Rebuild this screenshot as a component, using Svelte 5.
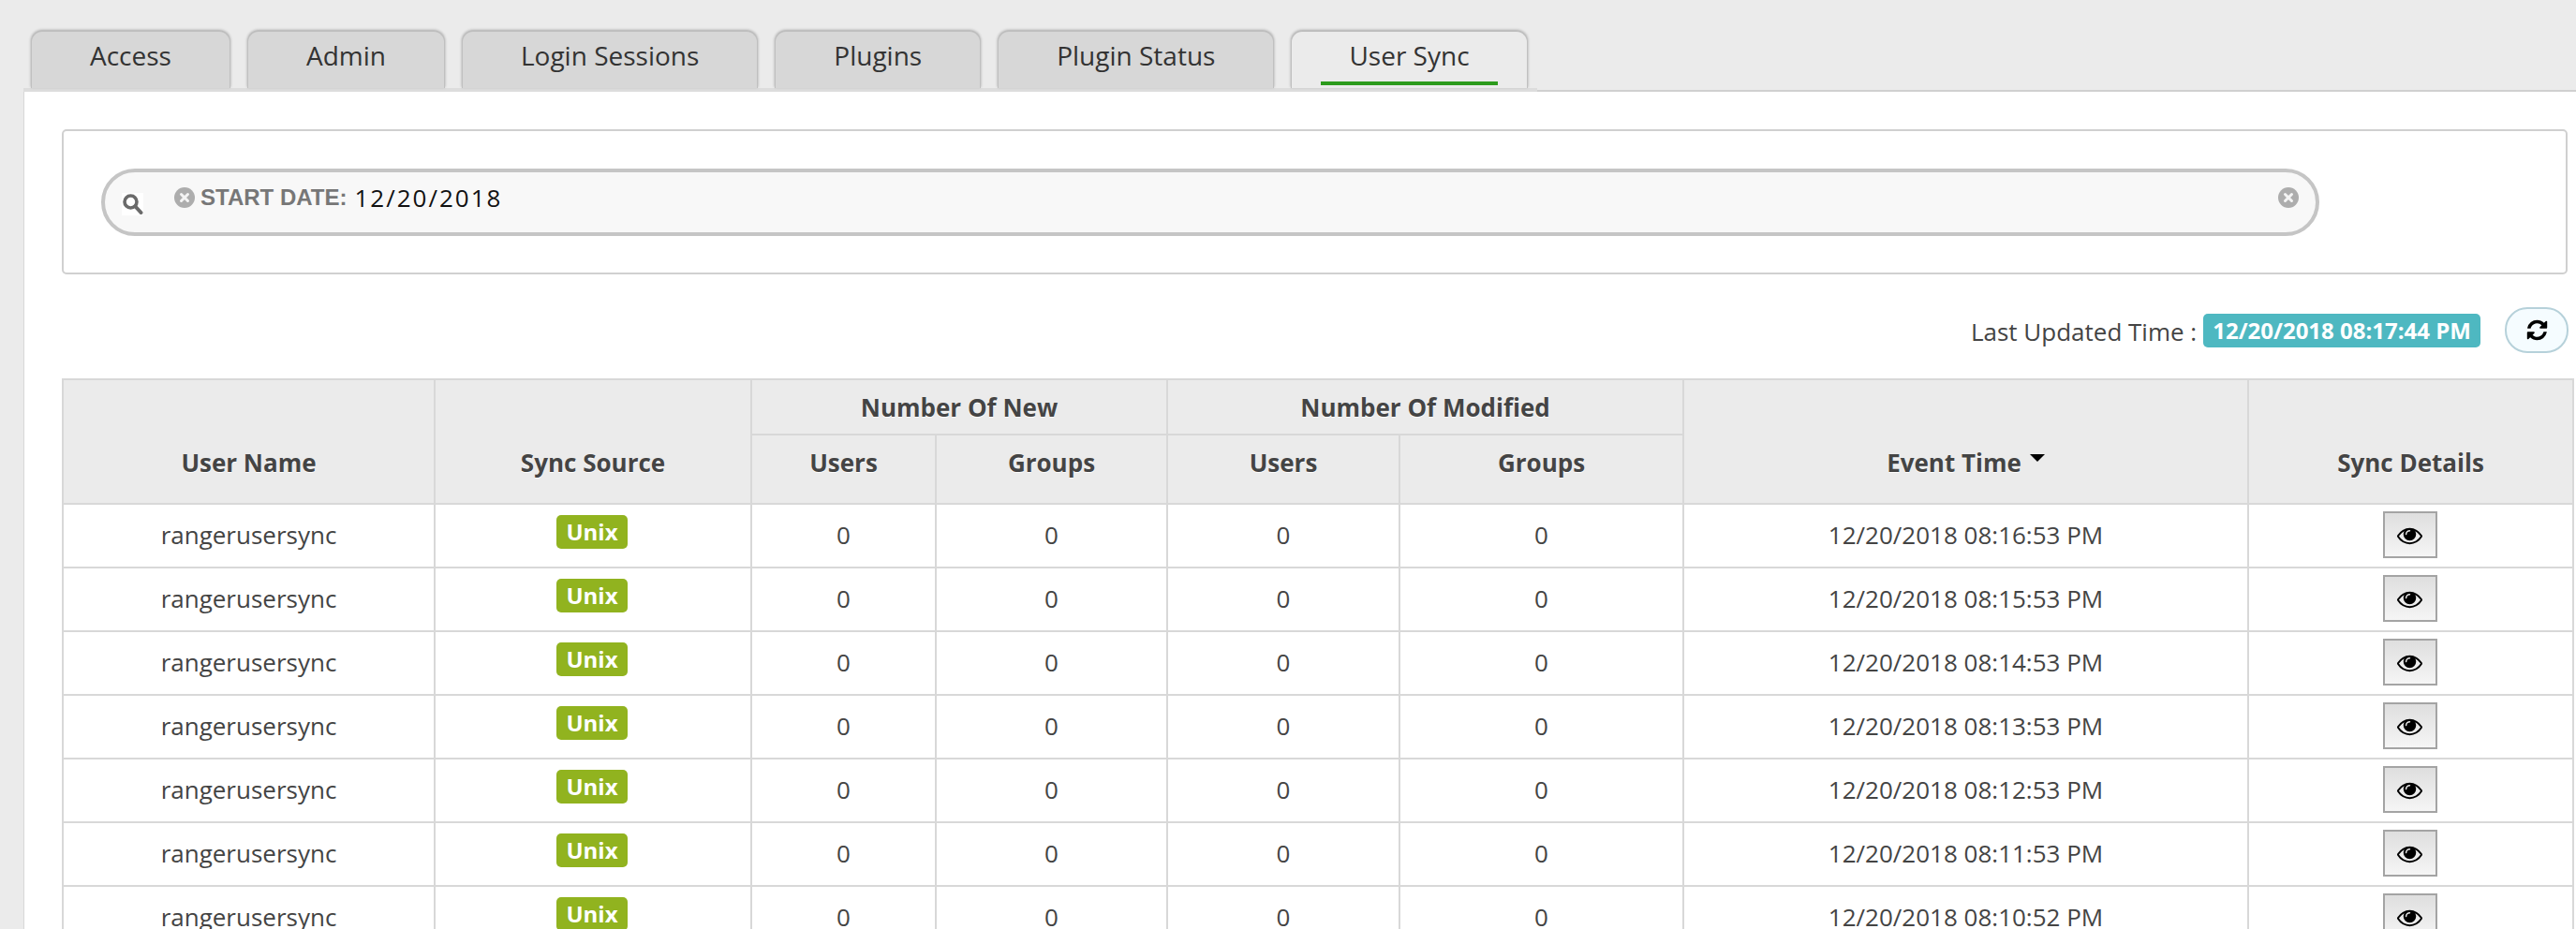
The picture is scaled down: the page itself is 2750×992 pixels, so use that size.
<script lang="ts">
  const tabs = ['Access', 'Admin', 'Login Sessions', 'Plugins', 'Plugin Status', 'User Sync'];
  const active = 'User Sync';
  const colWidths = [397, 338, 197, 247, 248, 303, 603, 347];

  const rows = [
    '12/20/2018 08:16:53 PM',
    '12/20/2018 08:15:53 PM',
    '12/20/2018 08:14:53 PM',
    '12/20/2018 08:13:53 PM',
    '12/20/2018 08:12:53 PM',
    '12/20/2018 08:11:53 PM',
    '12/20/2018 08:10:52 PM'
  ];

  const refreshPath =
    'M1639 1056q0 5-1 7-64 268-268 434.5t-478 166.5q-146 0-282.5-55t-243.5-157l-129 129q-19 19-45 19t-45-19-19-45v-448q0-26 19-45t45-19h448q26 0 45 19t19 45-19 45l-137 137q71 66 161 102t187 36q134 0 250-65t186-179q11-17 53-117 8-23 30-23h192q13 0 22.5 9.5t9.5 22.5zm25-800v448q0 26-19 45t-45 19h-448q-26 0-45-19t-19-45 19-45l138-138q-148-137-349-137-134 0-250 65t-186 179q-11 17-53 117-8 23-30 23h-199q-13 0-22.5-9.5t-9.5-22.5v-7q65-268 270-434.5t480-166.5q146 0 284 55.5t245 156.5l130-129q19-19 45-19t45 19 19 45z';
  const eyePath =
    'M1664 960q-152-236-381-353 61 104 61 225 0 185-131.5 316.5t-316.5 131.5-316.5-131.5-131.5-316.5q0-121 61-225-229 117-381 353 133 205 333.5 326.5t434.5 121.5 434.5-121.5 333.5-326.5zm-720-384q0-20-14-34t-34-14q-125 0-214.5 89.5t-89.5 214.5q0 20 14 34t34 14 34-14 14-34q0-86 61-147t147-61q20 0 34-14t14-34zm848 384q0 34-20 69-140 230-376.5 368.5t-499.5 138.5-499.5-139-376.5-368q-20-35-20-69t20-69q140-229 376.5-368t499.5-139 499.5 139 376.5 368q20 35 20 69z';
</script>

{#snippet clearIcon()}
  <svg class="clear" viewBox="0 0 22 22" aria-hidden="true">
    <circle cx="11" cy="11" r="11" fill="#adadad" />
    <path d="M7.5 7.5l7 7M14.5 7.5l-7 7" stroke="#f4f4f4" stroke-width="3" stroke-linecap="round" />
  </svg>
{/snippet}

<div class="page">
  <nav class="tabs">
    {#each tabs as tab (tab)}
      <div class="tab" class:active={tab === active}>
        <span class="tab-label">{tab}</span>
      </div>
    {/each}
  </nav>

  <main class="panel">
    <section class="search-box">
      <div class="pill">
        <span class="search-icon">
          <svg viewBox="0 0 23 23" width="23" height="23" aria-hidden="true">
            <circle cx="9.5" cy="9.5" r="6.5" fill="none" stroke="#6a6a6a" stroke-width="3.6" />
            <path d="M14.5 14.5l6 6.5" stroke="#6a6a6a" stroke-width="4" stroke-linecap="round" />
          </svg>
        </span>
        <div class="facet">
          {@render clearIcon()}
          <span class="facet-label">START DATE:</span>
          <span class="facet-value">12/20/2018</span>
        </div>
        {@render clearIcon()}
      </div>
    </section>

    <div class="updated">
      <span class="updated-label">Last Updated Time :</span>
      <span class="updated-time">12/20/2018 08:17:44 PM</span>
      <button class="refresh" aria-label="Refresh">
        <svg viewBox="0 0 1792 1792" width="25" height="25"><path d={refreshPath} /></svg>
      </button>
    </div>

    <table>
      <colgroup>
        {#each colWidths as w}
          <col style="width: {w}px" />
        {/each}
      </colgroup>
      <thead>
        <tr class="head-top">
          <th rowspan="2">User Name</th>
          <th rowspan="2">Sync Source</th>
          <th colspan="2" class="group">Number Of New</th>
          <th colspan="2" class="group">Number Of Modified</th>
          <th rowspan="2">Event Time<span class="caret"></span></th>
          <th rowspan="2">Sync Details</th>
        </tr>
        <tr class="head-sub">
          <th>Users</th>
          <th>Groups</th>
          <th>Users</th>
          <th>Groups</th>
        </tr>
      </thead>
      <tbody>
        {#each rows as time (time)}
          <tr>
            <td>rangerusersync</td>
            <td><span class="source">Unix</span></td>
            <td>0</td>
            <td>0</td>
            <td>0</td>
            <td>0</td>
            <td>{time}</td>
            <td>
              <button class="details" aria-label="View details">
                <svg viewBox="0 0 1792 1792" width="27" height="27"><path d={eyePath} /></svg>
              </button>
            </td>
          </tr>
        {/each}
      </tbody>
    </table>
  </main>
</div>

<style>
  :global(html),
  :global(body) {
    overflow: hidden;
  }

  :global(body) {
    background: #ebebeb;
  }

  .page {
    font-family: 'Open Sans', 'Liberation Sans', sans-serif;
    color: #444;
    height: 992px;
    overflow: hidden;
    padding-top: 33px;
    box-sizing: border-box;
  }

  .tabs {
    position: relative;
    z-index: 1;
    display: flex;
    gap: 18px;
    width: fit-content;
    margin-left: 25px;
    margin-bottom: -2px;
    padding: 0 10px 0 8px;
    border-bottom: 4px solid #ddd;
  }

  .tab {
    box-sizing: border-box;
    height: 61px;
    padding: 5px 62px 0;
    background: #d7d7d7;
    border: 1px solid #c0c0c0;
    border-bottom: none;
    border-radius: 12px 12px 0 0;
    box-shadow: 0 -1px 3px rgba(0, 0, 0, 0.3);
    font-size: 28px;
    line-height: 41px;
    white-space: nowrap;
    color: #333;
  }

  .tab.active {
    background: #ebebeb;
    padding: 5px 31px 0;
  }

  .tab-label {
    display: block;
    height: 52px;
    box-sizing: border-box;
  }

  .tab.active .tab-label {
    border-bottom: 4px solid #2c9b1c;
    padding-inline: 30px;
  }

  .panel {
    background: #fff;
    margin-left: 25px;
    border-left: 1px solid #d8d8d8;
    border-top: 2px solid #d0d0d0;
    padding: 40px 0 0 40px;
  }

  .search-box {
    box-sizing: border-box;
    width: 2675px;
    height: 155px;
    padding: 40px;
    border: 2px solid #d0d0d0;
    border-radius: 5px;
  }

  .pill {
    box-sizing: border-box;
    display: flex;
    align-items: flex-start;
    width: 2368px;
    height: 72px;
    padding: 16px 18px 0 18px;
    background: #f8f8f8;
    border: 4px solid #c5c5c5;
    border-radius: 36px;
  }

  .search-icon {
    display: block;
    width: 23px;
    height: 24px;
    margin-top: 6px;
    background: #fff;
  }

  .facet {
    flex: 1;
    display: flex;
    align-items: center;
    height: 22px;
    margin-left: 33px;
    gap: 6px;
  }

  .clear {
    flex: none;
    display: block;
    width: 22px;
    height: 22px;
  }

  .facet-label {
    font-family: 'Liberation Sans', Arial, sans-serif;
    font-weight: 700;
    font-size: 24px;
    color: #777;
  }

  .facet-value {
    margin-left: 2px;
    font-size: 26px;
    letter-spacing: 2px;
    color: #111;
  }

  .updated {
    display: flex;
    align-items: center;
    width: 2676px;
    height: 49px;
    margin-top: 35px;
  }

  .updated-label {
    margin-left: auto;
    padding-top: 2px;
    font-size: 26px;
    color: #444;
  }

  .updated-time {
    margin-left: 7px;
    padding: 0 10px;
    height: 36px;
    line-height: 35px;
    background: #4eb8c1;
    border-radius: 5px;
    color: #fff;
    font-size: 24px;
    font-weight: 700;
  }

  .refresh {
    display: flex;
    align-items: center;
    justify-content: center;
    box-sizing: border-box;
    width: 68px;
    height: 49px;
    margin-left: 26px;
    padding: 0;
    background: #f5fcff;
    border: 2px solid #b6d1da;
    border-radius: 24px;
  }

  table {
    table-layout: fixed;
    border-collapse: collapse;
    width: 2680px;
    margin-top: 27px;
    font-size: 26px;
  }

  th,
  td {
    border: 2px solid #d8d8d8;
    text-align: center;
    padding: 0;
  }

  th {
    background: #ebebeb;
    font-weight: 700;
    color: #444;
    text-shadow: 0 1px 0 #fff;
    vertical-align: bottom;
    padding-bottom: 26px;
    line-height: 34px;
  }

  .head-top {
    height: 59px;
  }

  th.group {
    vertical-align: middle;
    padding-bottom: 0;
  }

  .head-sub {
    height: 74px;
  }

  tbody tr {
    height: 68px;
  }

  td {
    line-height: 32px;
    padding-bottom: 2px;
  }

  .caret {
    display: inline-block;
    width: 0;
    height: 0;
    margin-left: 9px;
    vertical-align: 11px;
    border-left: 8px solid transparent;
    border-right: 8px solid transparent;
    border-top: 8px solid #000;
  }

  .source {
    display: inline-block;
    position: relative;
    top: -4px;
    left: -1px;
    width: 76px;
    height: 36px;
    line-height: 35px;
    background: #91b31f;
    border-radius: 5px;
    color: #fff;
    font-size: 24px;
    font-weight: 700;
    vertical-align: middle;
  }

  .details {
    display: inline-flex;
    align-items: center;
    justify-content: center;
    box-sizing: border-box;
    width: 58px;
    height: 50px;
    margin-right: 2px;
    padding: 0;
    vertical-align: middle;
    background: linear-gradient(#dedede, #f5f5f5);
    border: 2px solid #a4a4a4;
  }
</style>
